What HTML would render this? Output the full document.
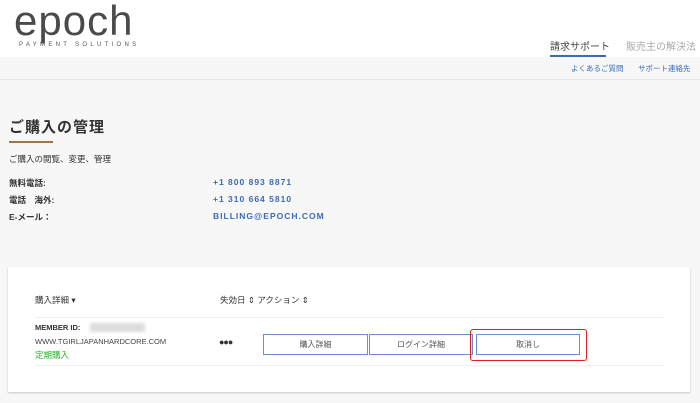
<!DOCTYPE html>
<html><head><meta charset="utf-8"><style>
*{margin:0;padding:0;box-sizing:border-box}
body{width:700px;height:403px;background:#f7f7f7;font-family:"Liberation Sans","Noto Sans CJK JP",sans-serif;position:relative;overflow:hidden;color:#333}
.a{position:absolute;white-space:nowrap}
.hdr{position:absolute;left:0;top:0;width:700px;height:57px;background:#fff}
.logo{left:14px;top:-3px;font-size:42px;color:#4a4a4a;letter-spacing:1px;font-weight:300}
.ps{left:19px;top:42px;font-size:6px;letter-spacing:3.3px;color:#555}
.b{font-size:8.5px;font-weight:bold}
.blue{color:#3a6bb5;font-weight:bold;font-size:8.5px;letter-spacing:1px}
.btn{position:absolute;top:334px;height:21px;border:1px solid #6a8fd0;background:#fff;font-size:8px;color:#555;text-align:center;line-height:19px}
</style></head><body>
<div class="hdr"></div>
<div class="a logo">epoch</div>
<div class="a ps">PAYMENT SOLUTIONS</div>
<div class="a" style="left:550px;top:38px;font-size:10px;color:#444">請求サポート</div>
<div style="position:absolute;left:550px;top:55px;width:56px;height:2px;background:#3a6bb5"></div>
<div class="a" style="left:626px;top:38px;font-size:10px;color:#aaa">販売主の解決法</div>
<div class="a" style="left:571px;top:63px;font-size:7.5px;color:#3a6bb5">よくあるご質問</div>
<div class="a" style="left:638px;top:63px;font-size:7.5px;color:#3a6bb5">サポート連絡先</div>
<div style="position:absolute;left:0;top:79px;width:700px;height:1px;background:#e6e6e6"></div>
<div class="a" style="left:9px;top:116px;font-size:15px;font-weight:bold;color:#333;letter-spacing:1px">ご購入の管理</div>
<div style="position:absolute;left:9px;top:141px;width:44px;height:2px;background:#a0744a"></div>
<div class="a" style="left:9px;top:153px;font-size:8.5px">ご購入の閲覧、変更、管理</div>
<div class="a b" style="left:9px;top:177px">無料電話:</div>
<div class="a b" style="left:9px;top:194px">電話　海外:</div>
<div class="a b" style="left:9px;top:211px">E-メール：</div>
<div class="a blue" style="left:213px;top:177px">+1 800 893 8871</div>
<div class="a blue" style="left:213px;top:194px">+1 310 664 5810</div>
<div class="a blue" style="left:213px;top:211px">BILLING@EPOCH.COM</div>
<div style="position:absolute;left:8px;top:267px;width:682px;height:125px;background:#fff;box-shadow:0 1px 2px rgba(0,0,0,.2)"></div>
<div class="a" style="left:35px;top:294px;font-size:8.5px">購入詳細 ▾</div>
<div class="a" style="left:220px;top:294px;font-size:8.5px">失効日 ⇕ アクション ⇕</div>
<div style="position:absolute;left:35px;top:317px;width:628px;height:1px;background:#eee"></div>
<div style="position:absolute;left:35px;top:365px;width:628px;height:1px;background:#eee"></div>
<div class="a b" style="left:35px;top:323px;font-size:7.5px">MEMBER ID:</div>
<div style="position:absolute;left:90px;top:323px;width:55px;height:9px;background:#ddd;filter:blur(1.5px)"></div>
<div class="a" style="left:35px;top:337px;font-size:7.5px;color:#444">WWW.TGIRLJAPANHARDCORE.COM</div>
<div class="a" style="left:35px;top:349px;font-size:8.5px;color:#2bb02b">定期購入</div>
<div class="a" style="left:219px;top:337px;font-size:9px;font-weight:bold;letter-spacing:-1px">●●●</div>
<div class="btn" style="left:263px;width:105px">購入詳細</div>
<div class="btn" style="left:369px;width:104px">ログイン詳細</div>
<div class="btn" style="left:476px;width:104px">取消し</div>
<div style="position:absolute;left:470px;top:329px;width:117px;height:32px;border:1.5px solid #e02020;border-radius:3px"></div>
</body></html>
